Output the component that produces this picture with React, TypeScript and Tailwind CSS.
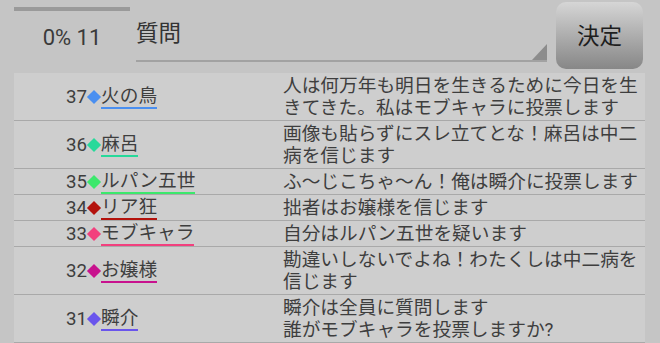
const rows = [
  { no: 37, name: "火の鳥", color: "bg-[#4a8ff0]", line: "border-[#4a8ff0]", msg: ["人は何万年も明日を生きるために今日を生きてきた。私はモブキャラに投票します"] },
  { no: 36, name: "麻呂", color: "bg-[#27d99a]", line: "border-[#27d99a]", msg: ["画像も貼らずにスレ立てとな！麻呂は中二病を信じます"] },
  { no: 35, name: "ルパン五世", color: "bg-[#3ce86c]", line: "border-[#3ce86c]", msg: ["ふ～じこちゃ～ん！俺は瞬介に投票します"] },
  { no: 34, name: "リア狂", color: "bg-[#b3120c]", line: "border-[#b3120c]", msg: ["拙者はお嬢様を信じます"] },
  { no: 33, name: "モブキャラ", color: "bg-[#f2407e]", line: "border-[#f2407e]", msg: ["自分はルパン五世を疑います"] },
  { no: 32, name: "お嬢様", color: "bg-[#c8128e]", line: "border-[#c8128e]", msg: ["勘違いしないでよね！わたくしは中二病を信じます"] },
  { no: 31, name: "瞬介", color: "bg-[#6a55ec]", line: "border-[#6a55ec]", msg: ["瞬介は全員に質問します", "誰がモブキャラを投票しますか?"] },
];

export default function App() {
  return (
    <div
      className="w-[660px] h-[343px] overflow-hidden bg-[#c5c5c5] text-[#3e3e3e]"
      style={{ fontFamily: 'Roboto, "Noto Sans CJK JP", sans-serif' }}
    >
      {/* header */}
      <div className="flex h-[73px]">
        <div className="ml-[14px] w-[116px] flex flex-col">
          <div className="mt-[7px] h-[4px] bg-[#9a9a9a]" />
          <div className="mt-[14px] text-center text-[22px] leading-[26px] text-[#3a3a3a]">0% 11</div>
        </div>
        <div className="ml-[6px] w-[411px] h-[62px] relative border-b-2 border-[#a2a2a2]">
          <div className="mt-[19px] text-[22.5px] leading-[28px] text-[#333]">質問</div>
          <div className="absolute right-0 bottom-0 w-0 h-0 border-l-[15px] border-l-transparent border-b-[16px] border-b-[#8c8c8c]" />
        </div>
        <button className="ml-[9px] mt-[2px] w-[87px] h-[67px] rounded-[10px] bg-gradient-to-b from-[#d6d6d6] to-[#878787] text-[22.5px] text-[#1e1e1e] flex items-center justify-center pt-[2px]">
          決定
        </button>
      </div>

      {/* list */}
      <div className="ml-[14px] w-[631px] h-[270px] bg-[#cecece] text-[18.7px]">
        {rows.map((r) => (
          <div key={r.no} className="flex border-b border-[#a9a9a9]">
            <div className="w-[269px] pl-[52px] flex items-center">
              <span className="leading-[22px]">{r.no}</span>
              <span className={`inline-block w-[10px] h-[10px] rotate-45 mx-[2px] ${r.color}`} />
              <span className={`leading-[22px] border-b-2 ${r.line}`}>{r.name}</span>
            </div>
            <div className="flex-1 py-[1.5px] leading-[22px] pr-[4px]">
              {r.msg.map((m) => (
                <div key={m}>{m}</div>
              ))}
            </div>
          </div>
        ))}
      </div>
    </div>
  );
}
